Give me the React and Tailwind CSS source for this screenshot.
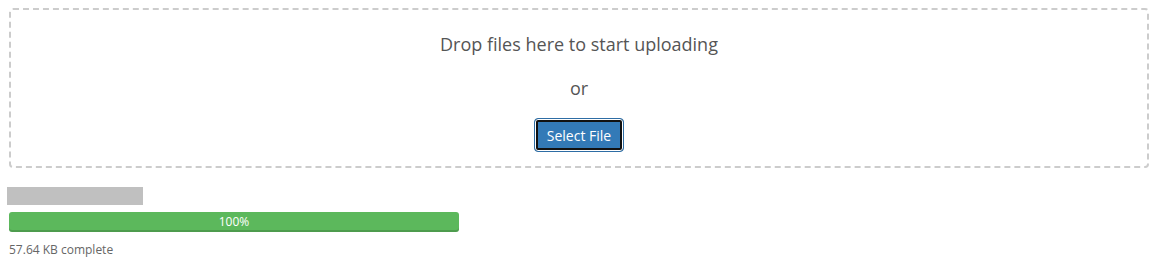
import React from 'react';

const App = () => {
    return (
        <div className="w-[1155px] h-[264px] bg-white font-['Open_Sans',sans-serif] text-[#555]">
            <div className="pt-[8px] pl-[9px]">
                <div className="w-[1140px] h-[160px] border-2 border-dashed border-[#cccccc] rounded-[4px] flex flex-col items-center pt-[22px]">
                    <p className="text-[18px] leading-[24px]">Drop files here to start uploading</p>
                    <p className="text-[18px] leading-[24px] mt-[20px]">or</p>
                    <button className="mt-[18px] h-[34px] px-[12px] text-[14px] text-white bg-[#337ab7] border border-[#2e6da4] rounded-[4px] shadow-[inset_0_0_0_1px_#ffffff,inset_0_0_0_3px_#111111]">
                        Select File
                    </button>
                </div>
            </div>
            <div className="pl-[7px] mt-[19px]">
                <div className="w-[136px] h-[18px] bg-[#c0c0c0]"></div>
            </div>
            <div className="pl-[9px] mt-[7px]">
                <div className="w-[450px] h-[20px] bg-[#5cb85c] rounded-[3px] shadow-[inset_0_-2px_0_rgba(0,0,0,0.15)] flex items-center justify-center text-[12px] text-white">
                    100%
                </div>
                <p className="mt-[9px] text-[12px] leading-[18px] text-[#666]">57.64 KB complete</p>
            </div>
        </div>
    );
};

export default App;
